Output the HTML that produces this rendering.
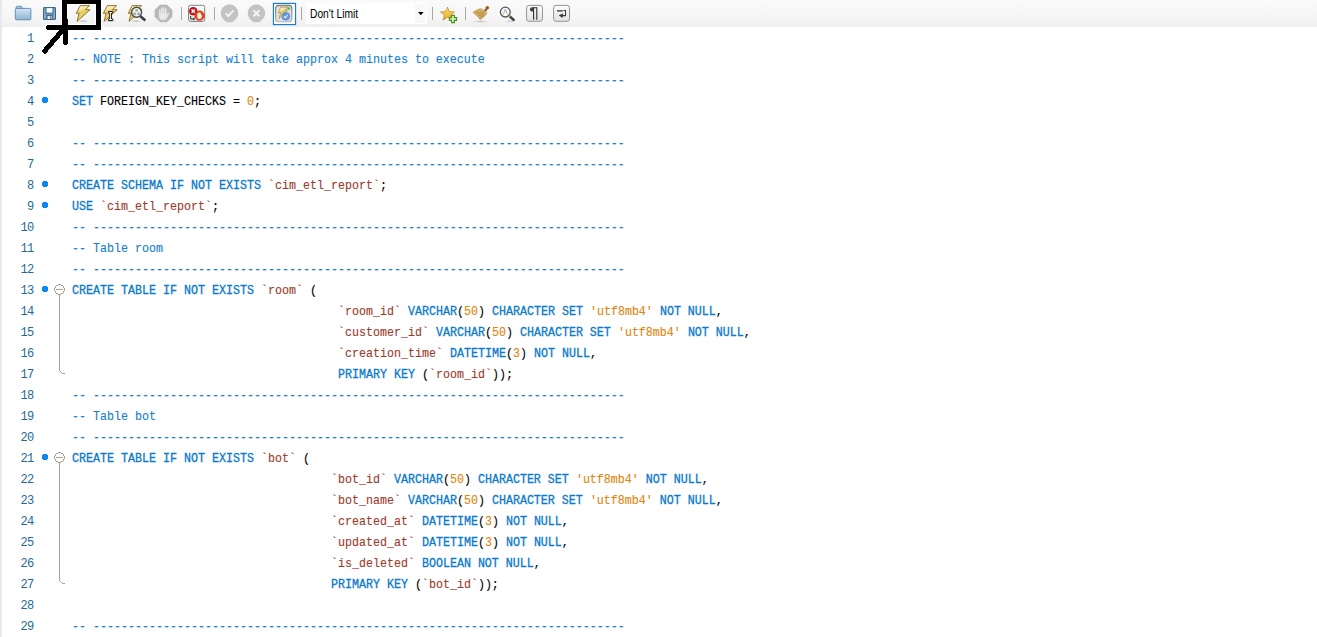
<!DOCTYPE html>
<html><head><meta charset="utf-8">
<style>
html,body{margin:0;padding:0;width:1317px;height:637px;overflow:hidden;background:#fff;position:relative}
.abs{position:absolute}
#lb{position:absolute;left:0;top:0;width:2px;height:637px;background:#e9e9ed}
#tb{position:absolute;left:2px;top:0;width:1315px;height:27px;background:linear-gradient(#fafafa,#f6f6f6 60%,#efefef)}
.sep{position:absolute;top:7px;width:1px;height:13px;background:#a8a8a8}
#code{position:absolute;left:0;top:27px;width:1317px}
.cl{margin-top:1.5px;-webkit-text-stroke-width:0.12px}.ln{margin-top:2px}
.ln{position:absolute;left:0;width:33.4px;text-align:right;font-family:"Liberation Mono",monospace;font-size:12px;letter-spacing:-0.7px;color:#1e6b98;line-height:21px;height:21px}
.cl{position:absolute;left:72px;white-space:pre;font-family:"Liberation Mono",monospace;font-size:12.1px;transform:scaleX(0.96419);transform-origin:0 0;line-height:21px;height:21px;color:#000}
.c{color:#1680d0}
.k{color:#0a7acb;-webkit-text-stroke-width:0.3px}
.q{color:#9c3b2b}
.n{color:#e0860e}
.dot{position:absolute;left:42px;width:6px;height:6px;background:linear-gradient(#0a88f0,#0a88f0) 1px 0/4px 6px no-repeat,linear-gradient(#0a88f0,#0a88f0) 0 1px/6px 4px no-repeat}
#dd{position:absolute;left:306px;top:3px;width:121px;height:21px;background:#fff}
#ddb{position:absolute;left:415px;top:4px;width:11px;height:19px;background:#f8f8f8}
#ddt{position:absolute;left:310px;top:6px;font-family:"Liberation Sans",sans-serif;font-size:12.5px;line-height:16px;color:#000;transform:scaleX(0.82);transform-origin:0 0;white-space:pre}
</style></head><body>
<div id="lb"></div>
<div id="tb"></div>
<div class="sep" style="left:181px"></div>
<div class="sep" style="left:214px"></div>
<div class="sep" style="left:301px"></div>
<div class="sep" style="left:432px"></div>
<div class="sep" style="left:465px"></div>
<svg class="abs" style="left:0;top:0" width="600" height="27" viewBox="0 0 600 27">
<defs>
<linearGradient id="gFold" x1="0" y1="0" x2="0" y2="1"><stop offset="0" stop-color="#d4e6f3"/><stop offset="1" stop-color="#8db4d2"/></linearGradient>
<linearGradient id="gBolt" x1="0" y1="0" x2="0.3" y2="1"><stop offset="0" stop-color="#fcf7d8"/><stop offset="0.3" stop-color="#f4e8a8"/><stop offset="0.45" stop-color="#e6cc60"/><stop offset="0.75" stop-color="#e8d070"/><stop offset="1" stop-color="#f4e6a0"/></linearGradient>
<linearGradient id="gBtn" x1="0" y1="0" x2="0" y2="1"><stop offset="0" stop-color="#fdfdfd"/><stop offset="1" stop-color="#e2e2e2"/></linearGradient>
<linearGradient id="gStar" x1="0" y1="0" x2="0" y2="1"><stop offset="0" stop-color="#fbe27a"/><stop offset="1" stop-color="#e8a420"/></linearGradient>
<radialGradient id="gShadow"><stop offset="0" stop-color="#000" stop-opacity="0.22"/><stop offset="1" stop-color="#000" stop-opacity="0"/></radialGradient>

</defs>
<!-- folder -->
<path d="M16.2 8.6 V7.3 Q16.2 6.3 17.2 6.3 H20.9 Q21.8 6.3 22 7.3 L22.3 8.6 Z" fill="#a9c9e0" stroke="#5a88ad" stroke-width="0.9"/>
<rect x="15.3" y="8.4" width="15.6" height="11.4" rx="1" fill="url(#gFold)" stroke="#5a88ad" stroke-width="0.9"/>
<!-- floppy -->
<rect x="43.5" y="7.5" width="12" height="12" rx="0.4" fill="#6a97b7" stroke="#3b6689" stroke-width="1"/>
<path d="M44.9 8.6 V18.4 M54.1 8.6 V18.4" stroke="#a4c4da" stroke-width="0.8"/>
<rect x="46" y="7.6" width="7" height="5.6" fill="#fbfcfd" stroke="#3b6689" stroke-width="1"/>
<rect x="47" y="15.6" width="5.2" height="3.9" fill="#e8eaec" stroke="#3b6689" stroke-width="1"/>
<rect x="50.2" y="16.4" width="0.9" height="2.4" fill="#555"/>
<!-- execute bolt -->
<ellipse cx="83.5" cy="21.2" rx="6" ry="1.4" fill="url(#gShadow)"/>
<path d="M80.2 5.6 L89.6 5.6 L85.4 9.7 L90.1 9.7 L77 21.4 L79.1 13.3 L76.3 13.3 Z" fill="url(#gBolt)" stroke="#8a6a1e" stroke-width="0.9" stroke-linejoin="miter"/>
<!-- bolt + I -->
<ellipse cx="110.5" cy="21.2" rx="6" ry="1.4" fill="url(#gShadow)"/>
<path d="M80.2 5.6 L89.6 5.6 L85.4 9.7 L90.1 9.7 L77 21.4 L79.1 13.3 L76.3 13.3 Z" transform="translate(27.1 0)" fill="url(#gBolt)" stroke="#8a6a1e" stroke-width="0.9"/>
<path d="M108.4 11.5 H112.8 V13.1 H111.5 V18.9 H112.8 V20.5 H108.4 V18.9 H109.7 V13.1 H108.4 Z" fill="#fff" stroke="#111" stroke-width="0.9" stroke-linejoin="round"/>
<!-- bolt + magnifier -->
<ellipse cx="136" cy="21.2" rx="6" ry="1.4" fill="url(#gShadow)"/>
<path d="M80.2 5.6 L89.6 5.6 L85.4 9.7 L90.1 9.7 L77 21.4 L79.1 13.3 L76.3 13.3 Z" transform="translate(52 0)" fill="url(#gBolt)" stroke="#8a6a1e" stroke-width="0.9"/>
<circle cx="136.6" cy="12.3" r="5" fill="#fbf6df" fill-opacity="0.92" stroke="#4a4a4a" stroke-width="1.4"/>
<path d="M136.6 10.3 L134.6 13.9 H138.7 Z" stroke="#e8d890" stroke-width="0.6" fill="none"/><circle cx="136.6" cy="10.3" r="1.3" fill="#7eaade"/>
<circle cx="134.6" cy="13.9" r="1.3" fill="#7eaade"/>
<circle cx="138.7" cy="13.9" r="1.3" fill="#7eaade"/>
<path d="M140.4 16.2 L145.3 20.5" stroke="#3a3a3a" stroke-width="2.6"/>
<!-- stop hand -->
<path d="M160 5 H167 L172 10 V16.7 L167 21.7 H160 L155 16.7 V10 Z" fill="#b9b9b9" stroke="#acacac" stroke-width="0.6"/>
<g fill="#e9e9e9"><rect x="159.1" y="9.2" width="1.5" height="6" rx="0.75"/><rect x="161.1" y="7.5" width="1.5" height="7" rx="0.75"/><rect x="163.1" y="7.3" width="1.5" height="7" rx="0.75"/><rect x="165.1" y="8.2" width="1.5" height="7" rx="0.75"/>
<path d="M159.1 13.5 H166.6 V15.6 L167.8 13.2 Q168.6 12.3 169.3 13 L167 18 Q165.8 20 163.4 20 H162.4 Q159.1 20 159.1 16.8 Z"/></g>
<!-- stop on error -->
<rect x="188.5" y="5.3" width="16.2" height="16.2" rx="2.2" fill="url(#gBtn)" stroke="#858585" stroke-width="1"/>
<circle cx="193.2" cy="11.2" r="3.9" fill="#cc1020" stroke="#9a0814" stroke-width="0.6"/>
<path d="M191.6 9.6 L194.8 12.8 M194.8 9.6 L191.6 12.8" stroke="#fff" stroke-width="1.4"/>
<path d="M190.7 16 V19 H193.6" stroke="#333" stroke-width="1" fill="none"/>
<path d="M193.2 17.4 L195.4 19 L193.2 20.6 Z" fill="#333"/>
<path d="M197.6 10.9 H201.4 L204.2 13.7 V17.5 L201.4 20.3 H197.6 L194.8 17.5 V13.7 Z" fill="#e4481a" stroke="#c43410" stroke-width="0.6"/>
<path d="M197.3 14.2 Q197.3 12.6 199.3 12.6 Q201.1 12.6 201.1 14.2 V15.4 L202.3 14.9 L201.3 18 Q200.6 19 199.3 19 Q197.3 19 197.3 17.2 Z" fill="#fbeee8"/>
<!-- check circle -->
<ellipse cx="229.5" cy="21.6" rx="6" ry="1.2" fill="url(#gShadow)"/>
<circle cx="229.5" cy="13.2" r="8.4" fill="#c3c3c3" stroke="#b8b8b8" stroke-width="0.6"/>
<path d="M225.7 13.4 L228.3 16 L233.6 10.4" stroke="#f4f4f4" stroke-width="2" fill="none"/>
<!-- x circle -->
<ellipse cx="256.4" cy="21.6" rx="6" ry="1.2" fill="url(#gShadow)"/>
<circle cx="256.4" cy="13.2" r="8.4" fill="#c3c3c3" stroke="#b8b8b8" stroke-width="0.6"/>
<path d="M253.4 10.2 L259.4 16.2 M259.4 10.2 L253.4 16.2" stroke="#f4f4f4" stroke-width="2"/>
<!-- autocommit focused -->
<rect x="273.4" y="3.4" width="22.2" height="21.2" fill="#fbfbfb" stroke="#0a78d7" stroke-width="1.1"/>
<linearGradient id="gAcB" x1="0" y1="0" x2="0" y2="1"><stop offset="0" stop-color="#6a6a6a"/><stop offset="1" stop-color="#b4b4b4"/></linearGradient><rect x="275.6" y="5.3" width="16.2" height="16.4" rx="3" fill="#e0e0e0" stroke="url(#gAcB)" stroke-width="1.1"/><path d="M277 7.2 Q277.4 6.4 278.6 6.4 H288.8 Q290 6.4 290.4 7.2" stroke="#b8b8b8" stroke-width="0.8" fill="none"/>
<path d="M280.6 7.2 L287.8 7.2 L284.8 10.2 L287.6 10.2 L279 18.6 L280.6 12.6 L278.4 12.6 Z" fill="url(#gBolt)" stroke="#a5852e" stroke-width="0.6"/>
<circle cx="285.8" cy="16.3" r="4" fill="#6597e0" stroke="#4c80cc" stroke-width="0.5"/>
<path d="M283.9 16.4 L285.3 17.8 L287.8 15" stroke="#fff" stroke-width="1.1" fill="none"/>
<circle cx="288.7" cy="8.6" r="1.1" fill="#22c822" stroke="#708070" stroke-width="0.3"/>
<!-- star plus -->
<path d="M447.5 7 L449.4 11.6 L454.6 11.9 L450.6 15.1 L451.9 20.1 L447.5 17.3 L443.1 20.1 L444.4 15.1 L440.4 11.9 L445.6 11.6 Z" fill="url(#gStar)" stroke="#c08a18" stroke-width="0.7"/>
<path d="M451.6 15.4 H454.4 V17.6 H456.6 V20.4 H454.4 V22.6 H451.6 V20.4 H449.4 V17.6 H451.6 Z" fill="#d4f8b8" stroke="#4e8a22" stroke-width="1.1"/>
<!-- broom -->
<ellipse cx="480.5" cy="21.5" rx="8" ry="1.3" fill="url(#gShadow)"/>
<path d="M472.8 12.4 Q476 10.2 480.2 8.6 L485.6 10.4 Q487.6 12.6 486.6 14 Q483.6 17.4 480.2 19.7 Q477.6 15.4 472.8 12.4 Z" fill="#d9b466" stroke="#a77e36" stroke-width="0.5"/>
<path d="M475 12.3 L485 11.6 M476.6 14 L485.6 13 M478.2 15.8 L485 14.6 M479.4 17.6 L483.6 16.2" stroke="#a98038" stroke-width="0.7"/>
<path d="M480.2 8.6 L485.6 10.4 Q487.6 12.6 486.6 14 L485.2 12.2 Z" fill="#cfc6b0"/>
<path d="M485.4 10.4 L487.2 8.2" stroke="#8c5c12" stroke-width="2" stroke-linecap="round"/><circle cx="487.3" cy="7.8" r="1.8" fill="#94621a"/>
<!-- find A -->
<ellipse cx="510" cy="21.2" rx="5" ry="1.1" fill="url(#gShadow)"/>
<circle cx="505.3" cy="12.1" r="4.9" fill="#fbfbfb" stroke="#555" stroke-width="1.3"/>
<path d="M503.2 14.6 L505.3 9.2 L507.4 14.6" stroke="#8a8a8a" stroke-width="0.7" fill="none"/>
<path d="M509.4 16 L514.4 20.6" stroke="#404040" stroke-width="2.4"/>
<path d="M509.2 15.6 L510.2 16.6" stroke="#d0a040" stroke-width="2.4"/>
<!-- pilcrow button -->
<rect x="526.6" y="5.4" width="15.9" height="15.9" rx="2.4" fill="url(#gBtn)" stroke="#8a8a8a" stroke-width="0.9"/>
<path d="M533.6 7.3 H531.8 Q529.9 7.3 529.9 9.4 Q529.9 11.4 531.8 11.4 H533.6 Z" fill="#444"/>
<path d="M533.6 7.3 V19.8 M536.8 7.3 V19.8 M533.4 7.7 H537.3" stroke="#2e2e2e" stroke-width="1.1"/>
<!-- wrap button -->
<rect x="553.6" y="5.4" width="15.9" height="15.9" rx="2.4" fill="url(#gBtn)" stroke="#8a8a8a" stroke-width="0.9"/>
<path d="M557 10.9 H562.7" stroke="#3a3a3a" stroke-width="1.4"/>
<path d="M563.4 10.5 H565.5 V15.6 H561" stroke="#3a3a3a" stroke-width="1.1" fill="none"/>
<path d="M558.7 15.6 L562.8 13.3 V17.9 Z" fill="#3a3a3a"/>
</svg>

<div id="dd"></div><div id="ddb"></div>
<div id="ddt">Don't Limit</div>
<svg class="abs" style="left:417.5px;top:12px" width="6" height="4"><path d="M0 0H5.6L2.8 3.2Z" fill="#000"/></svg>

<div id="code">
<div class="ln" style="top:0px">1</div>
<div class="cl" style="top:0px"><span class="c">-- ----------------------------------------------------------------------------</span></div>
<div class="ln" style="top:21px">2</div>
<div class="cl" style="top:21px"><span class="c">-- NOTE : This script will take approx 4 minutes to execute</span></div>
<div class="ln" style="top:42px">3</div>
<div class="cl" style="top:42px"><span class="c">-- ----------------------------------------------------------------------------</span></div>
<div class="ln" style="top:63px">4</div>
<div class="dot" style="top:70px"></div>
<div class="cl" style="top:63px"><span class="k">SET</span> FOREIGN_KEY_CHECKS = <span class="n">0</span>;</div>
<div class="ln" style="top:84px">5</div>
<div class="ln" style="top:105px">6</div>
<div class="cl" style="top:105px"><span class="c">-- ----------------------------------------------------------------------------</span></div>
<div class="ln" style="top:126px">7</div>
<div class="cl" style="top:126px"><span class="c">-- ----------------------------------------------------------------------------</span></div>
<div class="ln" style="top:147px">8</div>
<div class="dot" style="top:154px"></div>
<div class="cl" style="top:147px"><span class="k">CREATE SCHEMA IF NOT EXISTS</span> <span class="q">`cim_etl_report`</span>;</div>
<div class="ln" style="top:168px">9</div>
<div class="dot" style="top:175px"></div>
<div class="cl" style="top:168px"><span class="k">USE</span> <span class="q">`cim_etl_report`</span>;</div>
<div class="ln" style="top:189px">10</div>
<div class="cl" style="top:189px"><span class="c">-- ----------------------------------------------------------------------------</span></div>
<div class="ln" style="top:210px">11</div>
<div class="cl" style="top:210px"><span class="c">-- Table room</span></div>
<div class="ln" style="top:231px">12</div>
<div class="cl" style="top:231px"><span class="c">-- ----------------------------------------------------------------------------</span></div>
<div class="ln" style="top:252px">13</div>
<div class="dot" style="top:259px"></div>
<div class="cl" style="top:252px"><span class="k">CREATE TABLE IF NOT EXISTS</span> <span class="q">`room`</span> (</div>
<div class="ln" style="top:273px">14</div>
<div class="cl" style="top:273px">                                      <span class="q">`room_id`</span> <span class="k">VARCHAR</span>(<span class="n">50</span>) <span class="k">CHARACTER SET</span> <span class="n">'utf8mb4'</span> <span class="k">NOT NULL</span>,</div>
<div class="ln" style="top:294px">15</div>
<div class="cl" style="top:294px">                                      <span class="q">`customer_id`</span> <span class="k">VARCHAR</span>(<span class="n">50</span>) <span class="k">CHARACTER SET</span> <span class="n">'utf8mb4'</span> <span class="k">NOT NULL</span>,</div>
<div class="ln" style="top:315px">16</div>
<div class="cl" style="top:315px">                                      <span class="q">`creation_time`</span> <span class="k">DATETIME</span>(<span class="n">3</span>) <span class="k">NOT NULL</span>,</div>
<div class="ln" style="top:336px">17</div>
<div class="cl" style="top:336px">                                      <span class="k">PRIMARY KEY</span> (<span class="q">`room_id`</span>));</div>
<div class="ln" style="top:357px">18</div>
<div class="cl" style="top:357px"><span class="c">-- ----------------------------------------------------------------------------</span></div>
<div class="ln" style="top:378px">19</div>
<div class="cl" style="top:378px"><span class="c">-- Table bot</span></div>
<div class="ln" style="top:399px">20</div>
<div class="cl" style="top:399px"><span class="c">-- ----------------------------------------------------------------------------</span></div>
<div class="ln" style="top:420px">21</div>
<div class="dot" style="top:427px"></div>
<div class="cl" style="top:420px"><span class="k">CREATE TABLE IF NOT EXISTS</span> <span class="q">`bot`</span> (</div>
<div class="ln" style="top:441px">22</div>
<div class="cl" style="top:441px">                                     <span class="q">`bot_id`</span> <span class="k">VARCHAR</span>(<span class="n">50</span>) <span class="k">CHARACTER SET</span> <span class="n">'utf8mb4'</span> <span class="k">NOT NULL</span>,</div>
<div class="ln" style="top:462px">23</div>
<div class="cl" style="top:462px">                                     <span class="q">`bot_name`</span> <span class="k">VARCHAR</span>(<span class="n">50</span>) <span class="k">CHARACTER SET</span> <span class="n">'utf8mb4'</span> <span class="k">NOT NULL</span>,</div>
<div class="ln" style="top:483px">24</div>
<div class="cl" style="top:483px">                                     <span class="q">`created_at`</span> <span class="k">DATETIME</span>(<span class="n">3</span>) <span class="k">NOT NULL</span>,</div>
<div class="ln" style="top:504px">25</div>
<div class="cl" style="top:504px">                                     <span class="q">`updated_at`</span> <span class="k">DATETIME</span>(<span class="n">3</span>) <span class="k">NOT NULL</span>,</div>
<div class="ln" style="top:525px">26</div>
<div class="cl" style="top:525px">                                     <span class="q">`is_deleted`</span> <span class="k">BOOLEAN NOT NULL</span>,</div>
<div class="ln" style="top:546px">27</div>
<div class="cl" style="top:546px">                                     <span class="k">PRIMARY KEY</span> (<span class="q">`bot_id`</span>));</div>
<div class="ln" style="top:567px">28</div>
<div class="ln" style="top:588px">29</div>
<div class="cl" style="top:588px"><span class="c">-- ----------------------------------------------------------------------------</span></div>
</div>
<svg class="abs" style="left:0;top:0" width="80" height="637" shape-rendering="crispEdges"><g fill="#a5a58f"><rect x="58" y="284" width="3" height="1"/><rect x="56" y="285" width="2" height="1"/><rect x="61" y="285" width="2" height="1"/><rect x="55" y="286" width="1" height="1"/><rect x="63" y="286" width="1" height="1"/><rect x="55" y="287" width="1" height="1"/><rect x="63" y="287" width="1" height="1"/><rect x="54" y="288" width="1" height="1"/><rect x="64" y="288" width="1" height="1"/><rect x="54" y="289" width="1" height="1"/><rect x="64" y="289" width="1" height="1"/><rect x="56" y="289" width="7" height="1"/><rect x="54" y="290" width="1" height="1"/><rect x="64" y="290" width="1" height="1"/><rect x="55" y="291" width="1" height="1"/><rect x="63" y="291" width="1" height="1"/><rect x="55" y="292" width="1" height="1"/><rect x="63" y="292" width="1" height="1"/><rect x="56" y="293" width="2" height="1"/><rect x="61" y="293" width="2" height="1"/><rect x="58" y="294" width="3" height="1"/><rect x="59" y="295" width="1" height="76"/><rect x="60" y="371" width="1" height="1"/><rect x="61" y="372" width="1" height="1"/><rect x="62" y="373" width="3" height="1"/><rect x="58" y="452" width="3" height="1"/><rect x="56" y="453" width="2" height="1"/><rect x="61" y="453" width="2" height="1"/><rect x="55" y="454" width="1" height="1"/><rect x="63" y="454" width="1" height="1"/><rect x="55" y="455" width="1" height="1"/><rect x="63" y="455" width="1" height="1"/><rect x="54" y="456" width="1" height="1"/><rect x="64" y="456" width="1" height="1"/><rect x="54" y="457" width="1" height="1"/><rect x="64" y="457" width="1" height="1"/><rect x="56" y="457" width="7" height="1"/><rect x="54" y="458" width="1" height="1"/><rect x="64" y="458" width="1" height="1"/><rect x="55" y="459" width="1" height="1"/><rect x="63" y="459" width="1" height="1"/><rect x="55" y="460" width="1" height="1"/><rect x="63" y="460" width="1" height="1"/><rect x="56" y="461" width="2" height="1"/><rect x="61" y="461" width="2" height="1"/><rect x="58" y="462" width="3" height="1"/><rect x="59" y="463" width="1" height="118"/><rect x="60" y="581" width="1" height="1"/><rect x="61" y="582" width="1" height="1"/><rect x="62" y="583" width="3" height="1"/></g></svg>
<svg class="abs" style="left:0;top:0" width="120" height="60" viewBox="0 0 120 60" shape-rendering="crispEdges">
<g stroke="#fff" stroke-width="7" fill="none" stroke-opacity="0.9">
<path d="M64.5 1.5 H98.5 V27 H64.5 Z" stroke-linejoin="miter"/>
<path d="M64.6 2 L65.6 42.5" stroke-linecap="round"/>
<path d="M48.2 27.5 H66" stroke-linecap="round"/>
<path d="M44.6 51.2 L63.2 29.5" stroke-linecap="round"/>
</g>
<g stroke="#000" stroke-width="5" fill="none">
<path d="M64.5 1.5 H98.5 V27 H64.5 Z" stroke-linejoin="miter"/>
<path d="M64.6 2 L65.6 42.5" stroke-linecap="round"/>
<path d="M48.2 27.5 H66" stroke-linecap="round"/>
<path d="M44.6 51.2 L63.2 29.5" stroke-linecap="round"/>
</g>
</svg>
</body></html>
